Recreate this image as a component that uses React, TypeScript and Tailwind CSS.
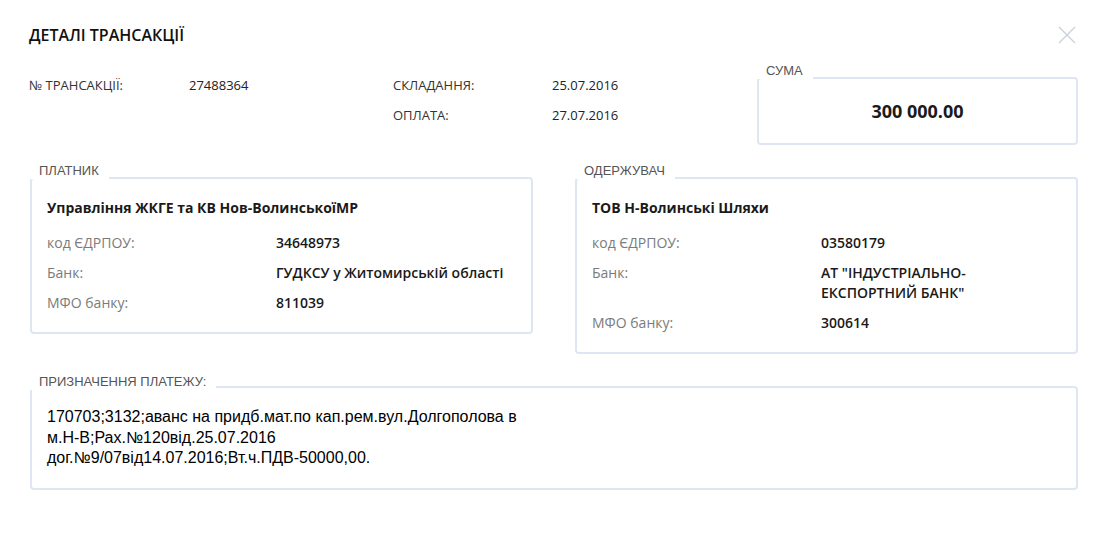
import type { ReactNode } from "react";

const SANS = "font-['Open_Sans',_'Noto_Sans',_sans-serif]";
const ARIAL = "font-['Liberation_Sans',_Arial,_sans-serif]";

type Row = { label: string; value: ReactNode };

function Box({
  legend,
  className = "",
  legendClass = "top-[-16px]",
  children,
}: {
  legend: string;
  className?: string;
  legendClass?: string;
  children: ReactNode;
}) {
  return (
    <div className={`relative rounded-[4px] border-2 border-[#dfe6f3] bg-white ${className}`}>
      <span
        className={`absolute left-[-2px] ${legendClass} bg-white pl-[9px] pr-[10px] text-[13px] leading-[16px] text-[#555] ${ARIAL}`}
      >
        {legend}
      </span>
      {children}
    </div>
  );
}

function PartyCard({ legend, name, rows }: { legend: string; name: string; rows: Row[] }) {
  return (
    <Box legend={legend} className="w-[503px] px-[15px] pt-[19px] pb-[19px]">
      <div className="mb-[15px] text-[14px] font-bold leading-[20px] text-[#1a1a1a]">{name}</div>
      <div className="flex flex-col gap-[10px]">
        {rows.map((r) => (
          <div key={r.label} className="grid grid-cols-[229px_1fr] text-[14px] leading-[20px]">
            <span className="text-[#7b7b7b]">{r.label}</span>
            <span className="font-semibold text-[#1a1a1a]">{r.value}</span>
          </div>
        ))}
      </div>
    </Box>
  );
}

export default function App() {
  return (
    <div className={`h-[549px] w-[1104px] bg-white pl-[30px] pr-[26px] pt-[25px] ${SANS}`}>
      <div className="flex items-center justify-between">
        <h1 className="ml-[-1px] text-[16px] font-semibold leading-[20px] text-[#111]">
          ДЕТАЛІ ТРАНСАКЦІЇ
        </h1>
        <svg width="18" height="18" viewBox="0 0 18 18" className="mr-[2px] mt-[-1px]">
          <path d="M1 1L17 17M17 1L1 17" stroke="#c9d1d9" strokeWidth="1.4" fill="none" />
        </svg>
      </div>

      <div className="mt-[32px] flex items-start">
        <div className="grid grid-cols-[159px_204px_159px_auto] gap-y-[14px] text-[13px] leading-[16px]">
          <span className="ml-[-1px] text-[#333]">№ ТРАНСАКЦІЇ:</span>
          <span className="font-medium text-[#222]">27488364</span>
          <span className="text-[#333]">СКЛАДАННЯ:</span>
          <span className="font-medium text-[#222]">25.07.2016</span>
          <span />
          <span />
          <span className="text-[#333]">ОПЛАТА:</span>
          <span className="font-medium text-[#222]">27.07.2016</span>
        </div>
        <Box legend="СУМА" className="ml-auto flex h-[68px] w-[321px] items-center justify-center">
          <span className="text-[18px] font-bold leading-[24px] text-[#1a1a1a]">300 000.00</span>
        </Box>
      </div>

      <div className="mt-[32px] flex items-start justify-between">
        <PartyCard
          legend="ПЛАТНИК"
          name="Управління ЖКГЕ та КВ Нов-ВолинськоїМР"
          rows={[
            { label: "код ЄДРПОУ:", value: "34648973" },
            { label: "Банк:", value: "ГУДКСУ у Житомирській області" },
            { label: "МФО банку:", value: "811039" },
          ]}
        />
        <PartyCard
          legend="ОДЕРЖУВАЧ"
          name="ТОВ Н-Волинські Шляхи"
          rows={[
            { label: "код ЄДРПОУ:", value: "03580179" },
            {
              label: "Банк:",
              value: (
                <>
                  АТ "ІНДУСТРІАЛЬНО-
                  <br />
                  ЕКСПОРТНИЙ БАНК"
                </>
              ),
            },
            { label: "МФО банку:", value: "300614" },
          ]}
        />
      </div>

      <Box legend="ПРИЗНАЧЕННЯ ПЛАТЕЖУ:" legendClass="top-[-14px]" className="mt-[32px] px-[15px] pt-[19px] pb-[19px]">
        <p className={`text-[16px] leading-[20.5px] text-black ${ARIAL}`}>
          170703;3132;аванс на придб.мат.по кап.рем.вул.Долгополова в
          <br />
          м.Н-В;Рах.№120від.25.07.2016
          <br />
          дог.№9/07від14.07.2016;Вт.ч.ПДВ-50000,00.
        </p>
      </Box>
    </div>
  );
}
